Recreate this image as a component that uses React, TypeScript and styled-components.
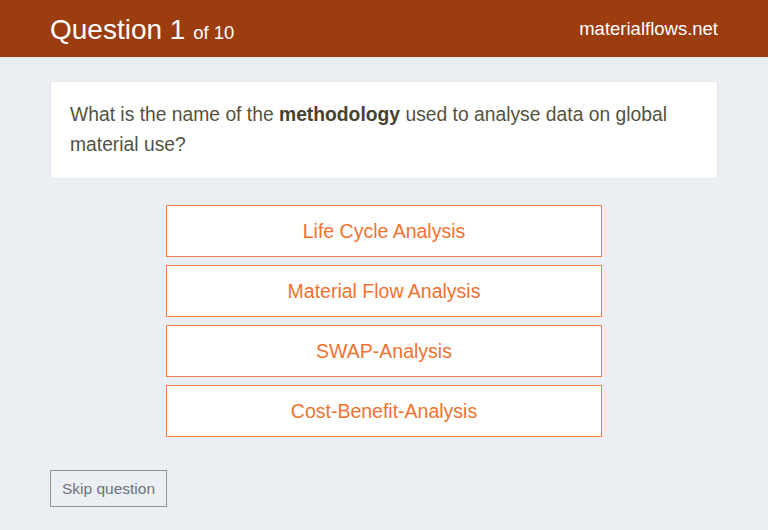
import React from "react";
import styled, { createGlobalStyle } from "styled-components";

const GlobalStyle = createGlobalStyle`
  html, body {
    margin: 0;
    padding: 0;
    background: #ebeef3;
    font-family: "Liberation Sans", Arial, sans-serif;
  }
`;

const Header = styled.header`
  height: 57px;
  background: #9c3d10;
  color: #fff;
  display: flex;
  align-items: center;
  justify-content: space-between;
  padding: 0 50px;
  box-sizing: border-box;
`;

const Title = styled.h1`
  margin: 0;
  font-size: 28px;
  font-weight: normal;
  padding-top: 2px;
  .count {
    font-size: 18.5px;
  }
`;

const Site = styled.span`
  font-size: 18.5px;
`;

const Main = styled.main`
  padding: 24px 50px 0;
`;

const QuestionCard = styled.div`
  background: #fff;
  border: 1px solid #e2e5ea;
  padding: 18px 19px;
  font-size: 19.3px;
  line-height: 30px;
  color: #53523f;
  b {
    color: #45432f;
  }
`;

const Answers = styled.div`
  width: 436px;
  margin: 26px auto 0;
  display: flex;
  flex-direction: column;
  gap: 8px;
`;

const Answer = styled.button`
  height: 52px;
  background: #fff;
  border: 1px solid #f0814a;
  color: #f0722f;
  font-family: inherit;
  font-size: 19.5px;
  cursor: pointer;
`;

const SkipButton = styled.button`
  margin-top: 33px;
  height: 37px;
  width: 117px;
  padding: 0;
  background: #ebeef3;
  border: 1px solid #8e949c;
  color: #6c737d;
  font-family: inherit;
  font-size: 15.5px;
`;

const answers = [
  "Life Cycle Analysis",
  "Material Flow Analysis",
  "SWAP-Analysis",
  "Cost-Benefit-Analysis",
];

const App = () => {
  return (
    <>
      <GlobalStyle />
      <Header>
        <Title>
          Question 1 <span className="count">of 10</span>
        </Title>
        <Site>materialflows.net</Site>
      </Header>
      <Main>
        <QuestionCard>
          What is the name of the <b>methodology</b> used to analyse data on
          global material use?
        </QuestionCard>
        <Answers>
          {answers.map((a) => (
            <Answer key={a}>{a}</Answer>
          ))}
        </Answers>
        <SkipButton>Skip question</SkipButton>
      </Main>
    </>
  );
};

export default App;
